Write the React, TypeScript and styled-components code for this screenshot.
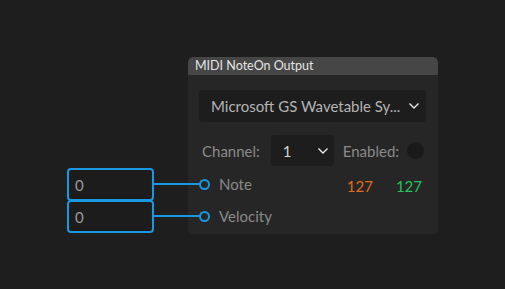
import React from 'react';
import styled, {createGlobalStyle} from 'styled-components';

const GlobalStyle = createGlobalStyle`
  html, body {
    margin: 0;
    padding: 0;
    background: #1e1e1e;
  }
  body {
    font-family: Lato, 'Noto Sans', sans-serif;
  }
`;

interface PortProps {
  label: string;
}

const Port = ({label}: PortProps) => (
  <PortRow>
    <PortDot />
    <PortLabel>{label}</PortLabel>
  </PortRow>
);

const Chevron = () => (
  <svg width="12" height="8" viewBox="0 0 12 8" fill="none">
    <path d="M1.5 1.5 L6 6 L10.5 1.5" stroke="#e8e8e8" strokeWidth="1.4" />
  </svg>
);

const App = () => {
  return (
    <>
      <GlobalStyle />
      <Canvas>
        <NumberBox style={{left: 67, top: 168}}>0</NumberBox>
        <NumberBox style={{left: 67, top: 200}}>0</NumberBox>

        <Node style={{left: 188, top: 57}}>
          <NodeHeader>MIDI NoteOn Output</NodeHeader>
          <NodeBody>
            <DeviceSelect>
              <span>Microsoft GS Wavetable Sy...</span>
              <Chevron />
            </DeviceSelect>
            <ChannelRow>
              <FieldLabel>Channel:</FieldLabel>
              <ChannelSelect>
                <span>1</span>
                <Chevron />
              </ChannelSelect>
              <FieldLabel>Enabled:</FieldLabel>
              <Toggle />
            </ChannelRow>
            <IoSection>
              <Ports>
                <Port label="Note" />
                <Port label="Velocity" />
              </Ports>
              <Values>
                <Value color="#e06c1f">127</Value>
                <Value color="#22c55e">127</Value>
              </Values>
            </IoSection>
          </NodeBody>
        </Node>

        <Edges width="505" height="289">
          <line x1="153" y1="184" x2="200" y2="184" stroke="#1a98e0" strokeWidth="2" />
          <line x1="153" y1="216" x2="200" y2="216" stroke="#1a98e0" strokeWidth="2" />
        </Edges>
      </Canvas>
    </>
  );
};

const Canvas = styled.div`
  position: relative;
  width: 505px;
  height: 289px;
  overflow: hidden;
  background: #1e1e1e;
`;

const Edges = styled.svg`
  position: absolute;
  left: 0;
  top: 0;
  pointer-events: none;
`;

const NumberBox = styled.div`
  position: absolute;
  box-sizing: border-box;
  width: 87px;
  height: 33px;
  border: 2px solid #1a98e0;
  border-radius: 4px;
  background: #1c1c1c;
  color: #9a9a9a;
  font-size: 15px;
  padding-left: 6px;
  display: flex;
  align-items: center;
`;

const Node = styled.div`
  position: absolute;
  width: 250px;
  height: 177px;
  background: #262626;
  border-radius: 5px;
  display: flex;
  flex-direction: column;
  overflow: hidden;
`;

const NodeHeader = styled.div`
  height: 18px;
  background: #464646;
  color: #e4e4e4;
  font-size: 12.5px;
  line-height: 18px;
  padding-left: 7px;
  border-radius: 5px 5px 0 0;
`;

const NodeBody = styled.div`
  display: flex;
  flex-direction: column;
  padding: 15px 12px 0 11px;
`;

const DeviceSelect = styled.div`
  box-sizing: border-box;
  height: 32px;
  background: #1d1d1d;
  border-radius: 4px;
  display: flex;
  align-items: center;
  justify-content: space-between;
  padding: 0 6px 0 12px;
  color: #b4b4b4;
  font-size: 15px;
  white-space: nowrap;
`;

const ChannelRow = styled.div`
  display: flex;
  align-items: center;
  height: 31px;
  margin-top: 13px;
  padding-left: 3px;
`;

const FieldLabel = styled.span`
  color: #8a8a8a;
  font-size: 15px;
  white-space: nowrap;
`;

const ChannelSelect = styled.div`
  box-sizing: border-box;
  width: 63px;
  height: 31px;
  margin: 0 9px 0 11px;
  background: #1d1d1d;
  border-radius: 4px;
  display: flex;
  align-items: center;
  justify-content: space-between;
  padding: 0 5px 0 12px;
  color: #d4d4d4;
  font-size: 15px;
`;

const Toggle = styled.div`
  width: 17px;
  height: 17px;
  border-radius: 50%;
  background: #1a1a1a;
  margin-left: 8px;
`;

const IoSection = styled.div`
  display: flex;
  justify-content: space-between;
  margin-top: 2px;
`;

const Ports = styled.div`
  display: flex;
  flex-direction: column;
`;

const PortRow = styled.div`
  display: flex;
  align-items: center;
  height: 32px;
`;

const PortDot = styled.div`
  box-sizing: border-box;
  width: 11px;
  height: 11px;
  border: 2px solid #1a98e0;
  border-radius: 50%;
  margin-right: 9px;
`;

const PortLabel = styled.span`
  color: #8a8a8a;
  font-size: 15px;
`;

const Values = styled.div`
  display: flex;
  gap: 23px;
  padding-top: 6px;
  padding-right: 4px;
`;

const Value = styled.span<{color: string}>`
  color: ${(p) => p.color};
  font-size: 15px;
  height: 24px;
  display: flex;
  align-items: center;
`;

export default App;
